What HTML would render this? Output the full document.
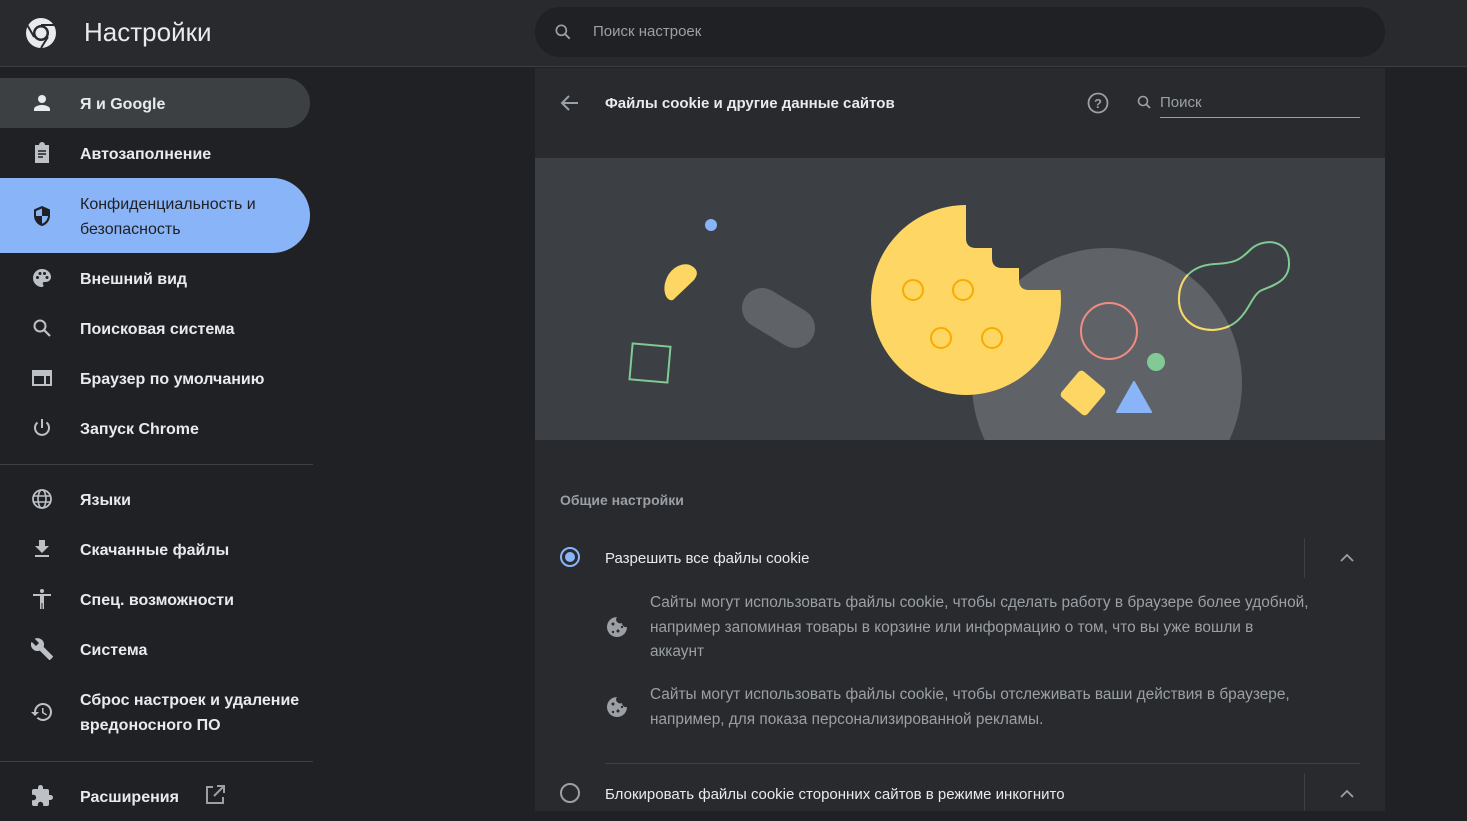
<!DOCTYPE html>
<html><head><meta charset="utf-8"><style>
*{margin:0;padding:0;box-sizing:border-box}
body{width:1467px;height:811px;overflow:hidden;background:#202124;font-family:"Liberation Sans",sans-serif;color:#e8eaed;position:relative}
.hdr{position:absolute;left:0;top:0;width:1467px;height:67px;background:#292a2d;border-bottom:1px solid #3c3d40}
.title{position:absolute;left:84px;top:17px;font-size:26px;color:#e8eaed}
.sbox{position:absolute;left:535px;top:7px;width:850px;height:50px;border-radius:25px;background:#202124}
.sbox span{position:absolute;left:58px;top:16px;font-size:15px;color:#9aa0a6}
.nav{position:absolute;left:0;font-size:16px;font-weight:bold;color:#e8eaed}
.it{position:absolute;left:0;width:310px;height:50px;border-radius:0 25px 25px 0}
.it .t{position:absolute;left:80px;top:17px;line-height:19px}
.it svg{position:absolute;left:30px;top:13px}
.sep{position:absolute;left:0;width:313px;height:1px;background:#3c4043}
.card{position:absolute;left:535px;top:68px;width:850px;height:743px;background:#292a2d}
.desc{position:absolute;left:650px;font-size:15.4px;color:#9aa0a6;line-height:24.5px}
</style></head><body>
<div class="hdr">
<svg style="position:absolute;left:25px;top:17px" width="32" height="32" viewBox="0 0 32 32"><circle cx="16" cy="16" r="15" fill="#e8eaed"/><circle cx="16" cy="16" r="8" fill="#292a2d"/><circle cx="16" cy="16" r="5.5" fill="#e8eaed"/><path d="M16 8 L30 8" stroke="#292a2d" stroke-width="2"/><path d="M9.1 20 L2.5 8.5" stroke="#292a2d" stroke-width="2"/><path d="M22.9 20 L16 31" stroke="#292a2d" stroke-width="2"/></svg>
<div class="title">Настройки</div>
<div class="sbox"><svg style="position:absolute;left:18px;top:15px" width="20" height="20" viewBox="0 0 24 24"><circle cx="10" cy="10" r="6" fill="none" stroke="#9aa0a6" stroke-width="2"/><path d="M14.5 14.5 L20 20" stroke="#9aa0a6" stroke-width="2.2"/></svg><span>Поиск настроек</span></div>
</div>

<div class="nav" style="top:0">
<div class="it" style="top:78px;background:#3c4043"><svg width="24" height="24" viewBox="0 0 24 24"><circle cx="12" cy="8" r="4" fill="#e8eaed"/><path d="M4 20v-2c0-2.7 5.3-4 8-4s8 1.3 8 4v2z" fill="#e8eaed"/></svg><span class="t">Я и Google</span></div>
<div class="it" style="top:128px"><svg width="24" height="24" viewBox="0 0 24 24"><path d="M5 4h4a3 3 0 0 1 6 0h4v18H5z" fill="#bdc1c6"/><path d="M8 10h8M8 13h8M8 16h5" stroke="#202124" stroke-width="1.6"/></svg><span class="t">Автозаполнение</span></div>
<div class="it" style="top:178px;height:75px;border-radius:0 38px 38px 0;background:#8ab4f8;color:#202124;font-weight:normal"><svg style="top:26px" width="24" height="24" viewBox="0 0 24 24"><path d="M12 2 L4 5.5v6c0 5 3.4 9.5 8 10.5 4.6-1 8-5.5 8-10.5v-6z" fill="#202124"/><path d="M12 4.5v7.5H6V7z M12 12h6c-.5 3.8-3 6.8-6 7.6z" fill="#8ab4f8"/></svg><span class="t" style="top:14px;line-height:25px">Конфиденциальность и<br>безопасность</span></div>
<div class="it" style="top:253px"><svg width="24" height="24" viewBox="0 0 24 24"><path d="M12 3a9 9 0 0 0 0 18c1 0 1.5-.7 1.5-1.5 0-.9-.8-1.2-.8-2 0-.8.7-1.5 1.5-1.5H16a5 5 0 0 0 5-5c0-4.4-4-8-9-8z" fill="#bdc1c6"/><circle cx="7.5" cy="11.5" r="1.5" fill="#202124"/><circle cx="10" cy="7.5" r="1.5" fill="#202124"/><circle cx="14.5" cy="7.5" r="1.5" fill="#202124"/><circle cx="17" cy="11.5" r="1.5" fill="#202124"/></svg><span class="t">Внешний вид</span></div>
<div class="it" style="top:303px"><svg width="24" height="24" viewBox="0 0 24 24"><circle cx="10" cy="10" r="5.5" fill="none" stroke="#bdc1c6" stroke-width="2"/><path d="M14 14 L20 20" stroke="#bdc1c6" stroke-width="2.2"/></svg><span class="t">Поисковая система</span></div>
<div class="it" style="top:353px"><svg width="24" height="24" viewBox="0 0 24 24"><rect x="3" y="5" width="18" height="14" fill="none" stroke="#bdc1c6" stroke-width="2"/><rect x="3" y="5" width="18" height="5" fill="#bdc1c6"/><path d="M15 10v9" stroke="#bdc1c6" stroke-width="2"/></svg><span class="t">Браузер по умолчанию</span></div>
<div class="it" style="top:403px"><svg width="24" height="24" viewBox="0 0 24 24"><path d="M12 3v9" stroke="#bdc1c6" stroke-width="2"/><path d="M7.5 6.5a7 7 0 1 0 9 0" fill="none" stroke="#bdc1c6" stroke-width="2"/></svg><span class="t">Запуск Chrome</span></div>
<div class="sep" style="top:464px"></div>
<div class="it" style="top:474px"><svg width="24" height="24" viewBox="0 0 24 24"><circle cx="12" cy="12" r="9" fill="none" stroke="#bdc1c6" stroke-width="1.8"/><ellipse cx="12" cy="12" rx="4" ry="9" fill="none" stroke="#bdc1c6" stroke-width="1.6"/><path d="M3 9h18M3 15h18" stroke="#bdc1c6" stroke-width="1.6"/></svg><span class="t">Языки</span></div>
<div class="it" style="top:524px"><svg width="24" height="24" viewBox="0 0 24 24"><path d="M19 9h-4V3H9v6H5l7 7z" fill="#bdc1c6"/><path d="M5 19h14" stroke="#bdc1c6" stroke-width="2"/></svg><span class="t">Скачанные файлы</span></div>
<div class="it" style="top:574px"><svg width="24" height="24" viewBox="0 0 24 24"><circle cx="12" cy="4" r="2" fill="#bdc1c6"/><path d="M21 9H3V7h18zM10 9h4v13h-1.5v-6h-1v6H10z" fill="#bdc1c6"/></svg><span class="t">Спец. возможности</span></div>
<div class="it" style="top:624px"><svg width="24" height="24" viewBox="0 0 24 24"><path d="M22.7 19l-9.1-9.1c.9-2.3.4-5-1.5-6.9-2-2-5-2.4-7.4-1.3L9 6 6 9 1.6 4.7C.4 7.1.9 10.1 2.9 12.1c1.9 1.9 4.6 2.4 6.9 1.5l9.1 9.1c.4.4 1 .4 1.4 0l2.3-2.3c.5-.4.5-1.1.1-1.4z" fill="#bdc1c6"/></svg><span class="t">Система</span></div>
<div class="it" style="top:674px;height:75px"><svg style="top:26px" width="24" height="24" viewBox="0 0 24 24"><path d="M13 3a9 9 0 0 0-9 9H1l4 4 4-4H6a7 7 0 1 1 2.1 5l-1.4 1.4A9 9 0 1 0 13 3zm-1 5v5l4.3 2.5.7-1.2-3.5-2.1V8z" fill="#bdc1c6"/></svg><span class="t" style="top:14px;line-height:25px">Сброс настроек и удаление<br>вредоносного ПО</span></div>
<div class="sep" style="top:761px"></div>
<div class="it" style="top:771px"><svg width="24" height="24" viewBox="0 0 24 24"><path d="M20.5 11H19V7a2 2 0 0 0-2-2h-4V3.5a2.5 2.5 0 0 0-5 0V5H4a2 2 0 0 0-2 2v3.8h1.5a2.7 2.7 0 0 1 0 5.4H2V20a2 2 0 0 0 2 2h3.8v-1.5a2.7 2.7 0 0 1 5.4 0V22H17a2 2 0 0 0 2-2v-4h1.5a2.5 2.5 0 0 0 0-5z" fill="#bdc1c6"/></svg><span class="t">Расширения</span><svg style="left:203px;top:12px" width="24" height="24" viewBox="0 0 24 24"><path d="M10 4H4v16h16v-6" fill="none" stroke="#9aa0a6" stroke-width="2"/><path d="M14 3h7v7M21 3l-10 10" fill="none" stroke="#9aa0a6" stroke-width="2"/></svg></div>
</div>

<div class="card"></div>
<svg style="position:absolute;left:0;top:0" width="1467" height="811">
<defs>
<clipPath id="bite"><path d="M850,190 H966 V238 Q966,248 976,248 H992 V258 Q992,268 1002,268 H1019 V280 Q1019,290 1029,290 H1080 V410 H850Z"/></clipPath>
<clipPath id="gc"><circle cx="1107" cy="383" r="135"/></clipPath>
<clipPath id="ill"><rect x="535" y="158" width="850" height="282"/></clipPath>
</defs>
<path d="M578 103H563M569 96l-7 7 7 7" fill="none" stroke="#9aa0a6" stroke-width="2"/>
<text x="605" y="108" font-size="15" font-weight="bold" fill="#e8eaed" font-family="Liberation Sans">Файлы cookie и другие данные сайтов</text>
<circle cx="1098" cy="103" r="9.5" fill="none" stroke="#9aa0a6" stroke-width="1.8"/>
<text x="1098" y="108" font-size="13" font-weight="bold" fill="#9aa0a6" text-anchor="middle" font-family="Liberation Sans">?</text>
<circle cx="1143" cy="101" r="4.5" fill="none" stroke="#9aa0a6" stroke-width="1.6"/><path d="M1146 104l4 4" stroke="#9aa0a6" stroke-width="1.8"/>
<text x="1160" y="107" font-size="15" fill="#9aa0a6" font-family="Liberation Sans">Поиск</text>
<rect x="1160" y="117" width="200" height="1" fill="#9aa0a6"/>
<rect x="535" y="158" width="850" height="282" fill="#3c3f43"/>
<g clip-path="url(#ill)">
<circle cx="1107" cy="383" r="135" fill="#5f6368"/>
<circle cx="966" cy="300" r="95" fill="#fdd663" clip-path="url(#bite)"/>
<g fill="none" stroke="#f9ab00" stroke-width="2"><circle cx="913" cy="290" r="10"/><circle cx="963" cy="290" r="10"/><circle cx="941" cy="338" r="10"/><circle cx="992" cy="338" r="10"/></g>
<circle cx="1109" cy="331" r="28" fill="none" stroke="#f28b82" stroke-width="2"/>
<circle cx="1156" cy="362" r="9" fill="#81c995"/>
<rect x="1066" y="376" width="34" height="34" rx="4" fill="#fdd663" transform="rotate(40 1083 393)"/>
<path d="M1134 382 L1151 412 H1117Z" fill="#8ab4f8" stroke="#8ab4f8" stroke-width="2" stroke-linejoin="round"/>
<path d="M1213,330 C1190,330 1178,315 1179,297 C1180,275 1196,265 1215,264 C1235,263 1240,260 1250,250 C1262,238 1288,238 1289,262 C1290,280 1275,285 1262,290 C1248,296 1248,328 1213,330 Z" fill="none" stroke="#81c995" stroke-width="2"/>
<path clip-path="url(#gc)" d="M1213,330 C1190,330 1178,315 1179,297 C1180,275 1196,265 1215,264 C1235,263 1240,260 1250,250 C1262,238 1288,238 1289,262 C1290,280 1275,285 1262,290 C1248,296 1248,328 1213,330 Z" fill="none" stroke="#fdd663" stroke-width="2"/>
<path d="M762 308 L795 328" stroke="#5f6368" stroke-width="40" stroke-linecap="round"/>
<rect x="631" y="345" width="38" height="36" fill="none" stroke="#81c995" stroke-width="2" transform="rotate(5 650 363)"/>
<path d="M690 265 C700 270 697 276 694 280 L673 300 C666 302 662 290 666 280 C670 268 682 262 690 265Z" fill="#fdd663"/>
<circle cx="711" cy="225" r="6" fill="#8ab4f8"/>
</g>
<text x="560" y="505" font-size="14" font-weight="bold" fill="#9aa0a6" font-family="Liberation Sans">Общие настройки</text>
<circle cx="570" cy="557" r="9" fill="none" stroke="#8ab4f8" stroke-width="2"/><circle cx="570" cy="557" r="5" fill="#8ab4f8"/>
<text x="605" y="563" font-size="15" fill="#e8eaed" font-family="Liberation Sans">Разрешить все файлы cookie</text>
<rect x="1304" y="538" width="1" height="40" fill="#3c4043"/>
<path d="M1341 561l6-6 6 6" fill="none" stroke="#9aa0a6" stroke-width="1.8"/>
<g fill="#9aa0a6"><path d="M617 617a10 10 0 1 0 10 10 4 4 0 0 1-5-4 4 4 0 0 1-5-6z"/><path d="M617 697a10 10 0 1 0 10 10 4 4 0 0 1-5-4 4 4 0 0 1-5-6z"/></g>
<g fill="#292a2d"><circle cx="613" cy="624" r="1.5"/><circle cx="618" cy="631" r="1.5"/><circle cx="613" cy="632" r="1.2"/><circle cx="622" cy="627" r="1.2"/><circle cx="613" cy="704" r="1.5"/><circle cx="618" cy="711" r="1.5"/><circle cx="613" cy="712" r="1.2"/><circle cx="622" cy="707" r="1.2"/></g>
<rect x="605" y="763" width="755" height="1" fill="#3c4043"/>
<circle cx="570" cy="793" r="9" fill="none" stroke="#9aa0a6" stroke-width="2"/>
<text x="605" y="799" font-size="15" fill="#e8eaed" font-family="Liberation Sans">Блокировать файлы cookie сторонних сайтов в режиме инкогнито</text>
<rect x="1304" y="773" width="1" height="40" fill="#3c4043"/>
<path d="M1341 797l6-6 6 6" fill="none" stroke="#9aa0a6" stroke-width="1.8"/>
</svg>
<div class="desc" style="top:591px">Сайты могут использовать файлы cookie, чтобы сделать работу в браузере более удобной,<br>например запоминая товары в корзине или информацию о том, что вы уже вошли в<br>аккаунт</div>
<div class="desc" style="top:683px">Сайты могут использовать файлы cookie, чтобы отслеживать ваши действия в браузере,<br>например, для показа персонализированной рекламы.</div>
</body></html>
